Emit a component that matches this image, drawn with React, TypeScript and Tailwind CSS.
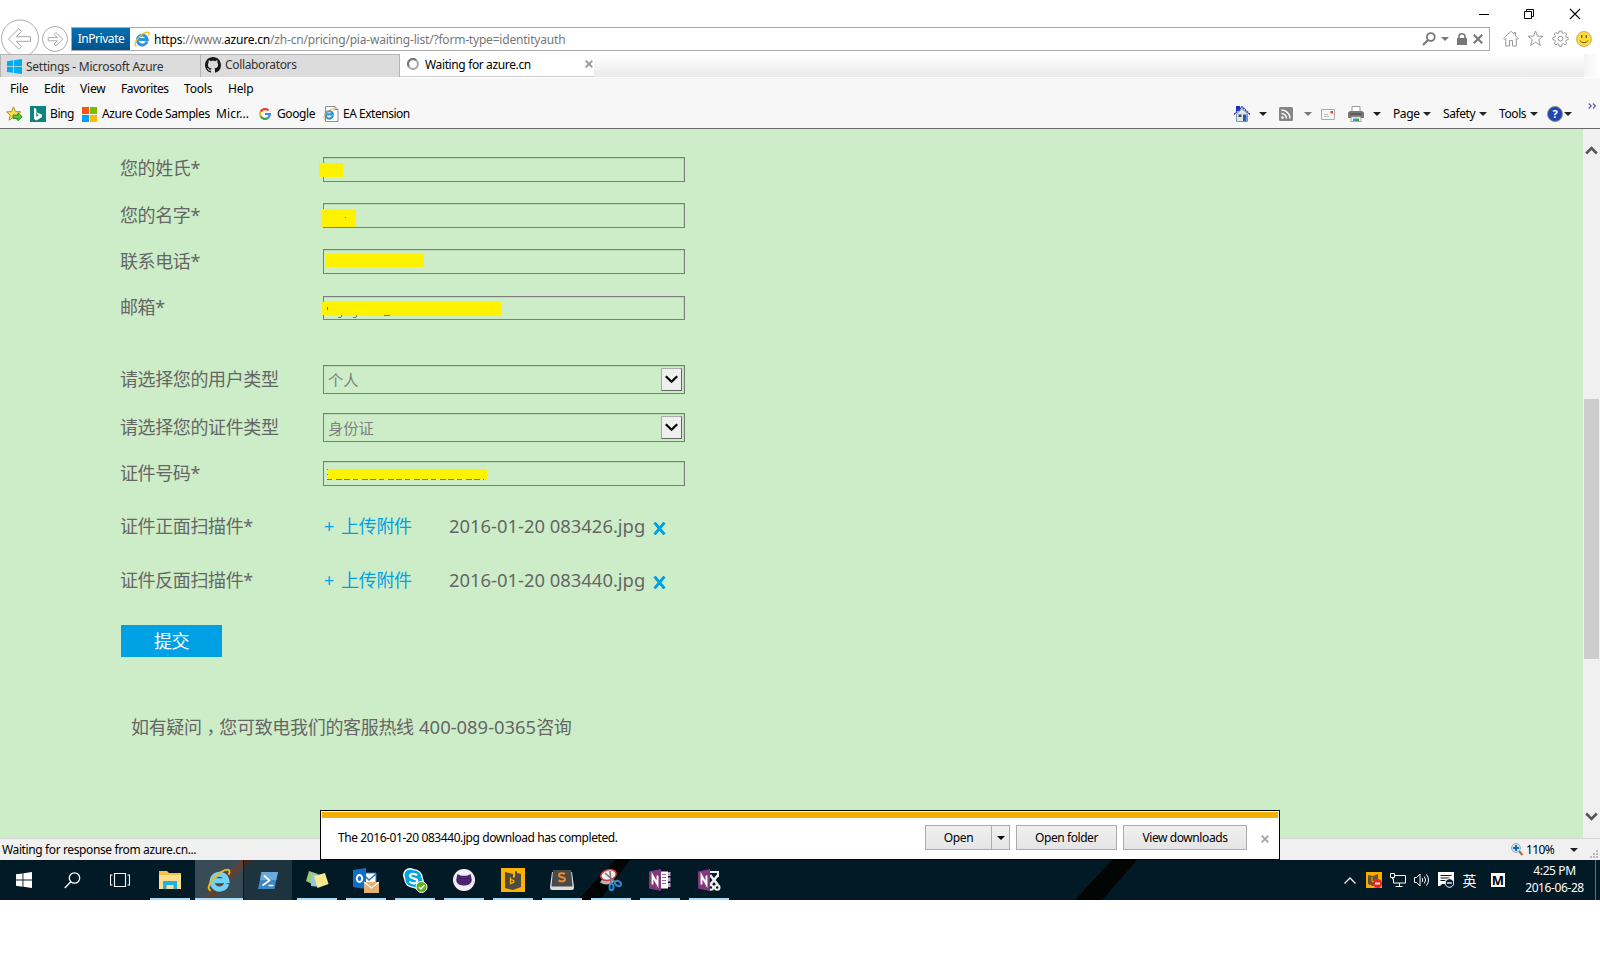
import type { ReactNode } from "react";

const Tri = ({ color = "#222" }: { color?: string }) => (
  <svg width="8" height="4" viewBox="0 0 8 4" className="shrink-0">
    <path d="M0 0h8L4 4z" fill={color} />
  </svg>
);

const Slot = ({ className, children }: { className: string; children?: ReactNode }) => (
  <div className={"flex shrink-0 items-center justify-center " + className}>{children}</div>
);

const Label = ({ className, children }: { className: string; children: ReactNode }) => (
  <span className={"shrink-0 whitespace-nowrap " + className}>{children}</span>
);

const IeLogo = ({ size, light }: { size: number; light?: boolean }) => (
  <svg width={size} height={size} viewBox="0 0 22 22" className="shrink-0">
    <path
      d="M18 14.4A6.800 6.800 0 1 1 18.200 11.600H7"
      fill="none"
      stroke={light ? "#6fd3f8" : "#2f93da"}
      strokeWidth={light ? 4.6 : 4}
    />
    <path
      d="M3.6 20.6C-1 20 2.5 12 9 6.5C14 2.2 20 0 20.6 2.8c.3 1-.2 2.3-.8 3.3"
      fill="none"
      stroke="#f5b81c"
      strokeWidth="1.7"
    />
  </svg>
);

/* ---------- window and address bar ---------- */

const WindowButtons = () => (
  <div className="flex h-[27px] items-center justify-end pr-[19px] pt-px">
    <svg width="12" height="12" viewBox="0 0 12 12">
      <path d="M1 6.5h10" stroke="#000" />
    </svg>
    <svg width="12" height="12" viewBox="0 0 12 12" className="ml-[33px]">
      <path d="M1.5 3.5h7v7h-7zM3.5 3V1.5h7v7H9" fill="none" stroke="#000" />
    </svg>
    <svg width="12" height="12" viewBox="0 0 12 12" className="ml-[34px]">
      <path d="M1 1l10 10M11 1L1 11" stroke="#000" strokeWidth="1.1" />
    </svg>
  </div>
);

const NavButtons = () => (
  <svg width="71" height="38" viewBox="0 16 71 38" className="-mt-[11px] shrink-0">
    <g fill="none" stroke="#a9a9a9">
      <circle cx="20" cy="38.5" r="18.5" fill="#fff" />
      <circle cx="55" cy="39" r="12.5" fill="#fff" />
      <path
        d="M8.5 39L18.8 28.8l2.7 2.7-5.2 5.2h14.2v4.6H16.3l5.2 5.2-2.7 2.7z"
        strokeLinejoin="round"
      />
      <path
        d="M62.8 39.2l-6.9-6.7-1.8 1.9 3.2 3.2h-9.1v3.2h9.1L54.1 44l1.8 1.9z"
        strokeLinejoin="round"
      />
    </g>
  </svg>
);

const AddressBar = () => (
  <div className="flex h-[27px]">
    <NavButtons />
    <div className="flex h-6 w-[1419px] shrink-0 items-center border border-[#ababab]">
      <div className="flex h-[22px] w-[58px] items-center justify-center bg-linear-to-b from-[#0670b0] to-[#00538a] text-[12px] tracking-[-0.45px] text-white">
        InPrivate
      </div>
      <Slot className="ml-[3px] w-[17px]">
        <IeLogo size={16} />
      </Slot>
      <Label className="ml-1 w-[1237px] pt-0.5 text-[12px] tracking-[-0.2px] text-[#777]">
        <span className="text-black">https</span>://www.<span className="text-black">azure.cn</span>
        /zh-cn/pricing/pia-waiting-list/?form-type=identityauth
      </Label>
      <Slot className="ml-[30px] w-[16px]">
        <svg width="14" height="14" viewBox="0 0 14 14">
          <circle cx="8.8" cy="5" r="3.9" fill="none" stroke="#777" strokeWidth="1.8" />
          <path d="M6 8L1 13" stroke="#777" strokeWidth="2" />
        </svg>
      </Slot>
      <Slot className="ml-0.5 w-3">
        <Tri color="#777" />
      </Slot>
      <Slot className="ml-[3px] w-4">
        <svg width="10" height="12" viewBox="0 0 10 12">
          <path d="M2 6V3.5a3 2.7 0 0 1 6 0V6" fill="none" stroke="#777" strokeWidth="1.6" />
          <path d="M0 5h10v7H0z" fill="#777" />
        </svg>
      </Slot>
      <Slot className="w-4">
        <svg width="10" height="10" viewBox="0 0 10 10">
          <path d="M.8.8l8.4 8.4M9.2.8L.8 9.2" stroke="#777" strokeWidth="2.1" />
        </svg>
      </Slot>
    </div>
    <div className="flex h-[23px] items-center gap-2 pl-[13px]">
      <svg width="16" height="17" viewBox="0 0 16 17" fill="none" stroke="#999">
        <path d="M.7 8.5L8 1.2l3 3V2.5h1.5V5.7l2.8 2.8-1 1-1-1V16H9.500v-5.500h-3V16H2.700V8.500l-1 1z" />
      </svg>
      <svg width="17" height="17" viewBox="0 0 17 17" fill="none" stroke="#999">
        <path d="M8.500 1l2 5.200h5.500l-4.300 3.500 1.700 5.800-4.900-3.400-4.900 3.400 1.700-5.800L1 6.200h5.500z" />
      </svg>
      <svg width="17" height="17" viewBox="0 0 17 17" fill="none" stroke="#999">
        <path d="M7.300 1h2.400l.4 2 1.300.6 1.700-1.200 1.700 1.700-1.200 1.700.6 1.300 1.900.4v2.300l-1.900.4-.6 1.300 1.200 1.700-1.700 1.700-1.700-1.200-1.300.6-.4 2H7.300l-.4-2-1.300-.6-1.700 1.200-1.700-1.700 1.200-1.700-.6-1.300L.9 9.800V7.500l1.900-.4.6-1.300-1.200-1.700 1.700-1.700 1.700 1.200L6.900 3z" />
        <circle cx="8.500" cy="8.600" r="2.400" />
      </svg>
      <svg width="16" height="16" viewBox="0 0 16 16" className="-ml-px">
        <circle cx="8" cy="8" r="7.500" fill="#fcd93c" stroke="#b5a45a" strokeWidth=".8" />
        <path d="M5.700 4v3M10.300 4v3" stroke="#7b6410" strokeWidth="1.400" />
        <path d="M3.700 9.500q4.300 4.500 8.600 0" fill="none" stroke="#7b6410" />
      </svg>
    </div>
  </div>
);

/* ---------- tabs and toolbars ---------- */

const Octocat = () => (
  <svg width="16" height="16" viewBox="0 0 16 16">
    <path
      fill="#181818"
      d="M8 0C3.580 0 0 3.580 0 8c0 3.540 2.290 6.530 5.470 7.590.4.070.55-.17.55-.38 0-.19-.01-.82-.01-1.490-2.010.37-2.530-.49-2.690-.94-.09-.23-.48-.94-.82-1.130-.28-.15-.68-.52-.01-.53.63-.01 1.080.58 1.230.82.72 1.210 1.870.87 2.330.66.07-.52.28-.87.51-1.070-1.780-.2-3.640-.89-3.640-3.950 0-.87.31-1.590.82-2.150-.08-.2-.36-1.020.08-2.120 0 0 .67-.21 2.200.82.64-.18 1.320-.27 2-.27s1.360.09 2 .27c1.530-1.040 2.200-.82 2.200-.82.44 1.100.16 1.920.08 2.120.51.56.82 1.270.82 2.150 0 3.070-1.870 3.750-3.650 3.950.29.25.54.73.54 1.480 0 1.070-.01 1.930-.01 2.200 0 .21.15.46.55.38A8.010 8.010 0 0 0 16 8c0-4.420-3.580-8-8-8z"
    />
  </svg>
);

const WinFlag = ({ color, size }: { color: string; size: number }) => (
  <svg width={size} height={size} viewBox="0 0 16 16" fill={color}>
    <path d="M0 2.300L6.500 1.400v6.200H0zM7.400 1.250L16 0v7.600H7.400zM0 8.500h6.500v6.200L0 13.800zM7.400 8.500H16V16l-8.600-1.200z" />
  </svg>
);

const Tabs = () => (
  <div className="flex h-6 border-b border-white">
    <div className="flex h-[23px] w-[200px] items-center border-l border-t border-[#b4b4b4] bg-[#dcdcdc] pl-1.5 pt-0.5">
      <span className="-mt-0.5">
        <WinFlag color="#00adef" size={15} />
      </span>
      <Label className="ml-1 text-[12px] tracking-[-0.27px] text-[#333]">Settings - Microsoft Azure</Label>
    </div>
    <div className="flex h-[23px] w-[200px] items-center border-x border-t border-[#b4b4b4] bg-[#dcdcdc] pb-[3px] pl-1">
      <Octocat />
      <Label className="ml-1 text-[12px] tracking-[-0.35px] text-[#333]">Collaborators</Label>
    </div>
    <div className="flex h-[23px] w-[194px] items-center border-b border-[#ccc] bg-white pl-[7px] pr-px">
      <svg width="12" height="12" viewBox="0 0 12 12" className="-mt-0.5">
        <circle cx="6" cy="6" r="4.900" fill="none" stroke="#a5a5a5" strokeWidth="2" />
        <path d="M1.800 8.500A4.900 4.900 0 0 1 9 2.100" fill="none" stroke="#777" strokeWidth="2" />
      </svg>
      <Label className="ml-1.5 flex-1 text-[12px] tracking-[-0.37px] text-black">Waiting for azure.cn</Label>
      <svg width="8" height="8" viewBox="0 0 8 8" className="-mt-0.5">
        <path d="M.7.7l6.600 6.600M7.300.7L.7 7.300" stroke="#999" strokeWidth="1.900" />
      </svg>
    </div>
    <div className="h-[23px] w-[990px] bg-linear-to-b from-white to-[#ebebeb]" />
    <div className="h-[23px] flex-1 bg-linear-to-r from-[#f4f4f4] to-white" />
  </div>
);

const MenuBar = () => (
  <div className="flex h-[21px] items-center pl-2.5 text-[12px] tracking-[-0.2px] text-black">
    <Label className="w-[34px]">File</Label>
    <Label className="w-9">Edit</Label>
    <Label className="w-[41px]">View</Label>
    <Label className="w-[63px] tracking-[-0.4px]">Favorites</Label>
    <Label className="w-11">Tools</Label>
    <Label className="">Help</Label>
  </div>
);

const FavoritesBar = () => (
  <div className="flex h-[29px] items-center pb-px pl-1.5 pt-0.5 text-[12px] tracking-[-0.4px] text-black">
    <svg width="17" height="16" viewBox="0 0 17 16" className="shrink-0">
      <path d="M7.500.8l2 4.700 5.300.3-4 3.300 1.300 5-4.600-2.800-4.500 2.900 1.200-5.200L.6 5.900l5-.4z" fill="#fbdc55" stroke="#c28f1d" />
      <path d="M7 9h5V6.800l4.300 4-4.300 4v-2.300H7z" fill="#52c440" stroke="#2d8b22" strokeWidth=".9" />
    </svg>
    <svg width="16" height="16" viewBox="0 0 16 16" className="ml-[7px] shrink-0">
      <path d="M0 0h16v16H0z" fill="#0c8484" />
      <path d="M4 2l2.300.8v7.900l2.500-1.500-1.300-.6-.8-2 5.300 1.900v2.600l-5.600 3.300L4 13z" fill="#fff" />
    </svg>
    <Label className="ml-1 w-8">Bing</Label>
    <svg width="15" height="15" viewBox="0 0 15 15" className="shrink-0">
      <path d="M0 0h7v7H0z" fill="#f65314" />
      <path d="M8 0h7v7H8z" fill="#7cbb00" />
      <path d="M0 8h7v7H0z" fill="#00a1f1" />
      <path d="M8 8h7v7H8z" fill="#ffbb00" />
    </svg>
    <Label className="ml-[5px] w-[114px]">Azure Code Samples</Label>
    <Label className="w-[43px] tracking-[0.1px]">Micr...</Label>
    <svg width="12" height="12" viewBox="0 0 12 12" className="shrink-0" fill="none" strokeWidth="2.200">
      <path d="M1.600 3.700A5 5 0 0 1 9.500 2.500" stroke="#ea4335" />
      <path d="M1.600 8.300a5 5 0 0 1 0-4.600" stroke="#fbbc05" />
      <path d="M9.300 9.700a5 5 0 0 1-7.700-1.400" stroke="#34a853" />
      <path d="M6 6h4.900a5 5 0 0 1-1.600 3.700" stroke="#4285f4" />
    </svg>
    <Label className="ml-[6px] w-[46px]">Google</Label>
    <span className="relative shrink-0">
      <svg width="16" height="16" viewBox="0 0 16 16">
        <path d="M2.500.5h9.500l3 3v12H2.500z" fill="#fff" stroke="#909090" />
        <path d="M12 .5v3h3" fill="none" stroke="#909090" />
      </svg>
      <span className="absolute left-0 top-0.5">
        <IeLogo size={12} />
      </span>
    </span>
    <Label className="ml-1 flex-1 tracking-[-0.48px]">EA Extension</Label>

    <Slot className="w-6">
      <svg width="16" height="16" viewBox="0 0 16 16">
        <path d="M2 0h4v5H2z" fill="#1a2fb8" />
        <path d="M2.500 8L8 2.500 13.500 8v7.500h-11z" fill="#dfe6ee" stroke="#8493a5" />
        <path d="M0 8.500L8 .8l8 7.700" fill="none" stroke="#2c45b8" strokeWidth="1.500" strokeDasharray="2 .5" />
        <path d="M9 8.500h3.500V15H9z" fill="#1d5fae" />
        <path d="M4.500 8.500h3v2.500h-3z" fill="#445" />
      </svg>
    </Slot>
    <Slot className="w-[18px]"><Tri /></Slot>
    <Slot className="w-7">
      <svg width="14" height="14" viewBox="0 0 14 14">
        <rect width="14" height="14" rx="1.500" fill="#858585" />
        <g fill="none" stroke="#fff" strokeWidth="1.500">
          <path d="M2.500 6.500a5 5 0 0 1 5 5M2.500 3a8.500 8.500 0 0 1 8.500 8.500" />
        </g>
        <circle cx="3.500" cy="10.500" r="1.200" fill="#fff" />
      </svg>
    </Slot>
    <Slot className="w-4"><Tri color="#777" /></Slot>
    <Slot className="w-6">
      <svg width="14" height="11" viewBox="0 0 14 11">
        <path d="M.5.5h13v10H.5z" fill="#f6f6f6" stroke="#aaa" />
        <path d="M9.500 2h2.500v2.500H9.500z" fill="#e04040" />
        <path d="M3 5.500h4M3 7.500h5" stroke="#bbb" />
      </svg>
    </Slot>
    <Slot className="w-8">
      <svg width="16" height="16" viewBox="0 0 16 16">
        <path d="M4 .5h8V6H4z" fill="#fff" stroke="#999" />
        <path d="M0 6.500L2 5h12l2 1.500V12H0z" fill="#777" />
        <path d="M2 8h12" stroke="#444" />
        <path d="M3.500 11h9l.8 4.500H2.700z" fill="#fff" stroke="#aaa" />
        <path d="M5 12.500h3V15H5z" fill="#2f9be0" />
        <path d="M8 12.500h3V15H8z" fill="#3b9b4a" />
      </svg>
    </Slot>
    <Slot className="w-2.5"><Tri /></Slot>
    <Label className="ml-[11px] w-[30px]">Page</Label>
    <Tri />
    <Label className="ml-3 w-9">Safety</Label>
    <Tri />
    <Label className="ml-3 w-[31px]">Tools</Label>
    <Tri />
    <Slot className="ml-2 w-[18px]">
      <span className="flex size-4 items-center justify-center rounded-full border border-[#8b8b8b] bg-[#2146b4] text-[11px] font-bold text-white">
        ?
      </span>
    </Slot>
    <Tri />
    <Slot className="ml-2 w-5 pb-[17px] pl-1">
      <svg width="9" height="6" viewBox="0 0 9 6">
        <path d="M.7.5L3.200 3 .7 5.500M5 .5L7.500 3 5 5.500" fill="none" stroke="#5a5cae" strokeWidth="1.200" />
      </svg>
    </Slot>
  </div>
);

/* ---------- form ---------- */

type FormRowProps = { label: string; className: string; raised?: boolean; children: ReactNode };

const FormRow = ({ label, className, raised, children }: FormRowProps) => (
  <div className={"flex items-center " + className}>
    <Label className={"w-[203px] leading-6 " + (raised ? "pb-[3px]" : "pb-px")}>{label}</Label>
    {children}
  </div>
);

const TextBox = ({ children }: { children?: ReactNode }) => (
  <div className="relative h-full w-[362px] border border-[#7d7d7d] shadow-[inset_-1px_1px_0_#bcd9b8]">{children}</div>
);

const SelectBox = ({ value }: { value: string }) => (
  <div className="flex h-full w-[362px] items-center justify-between border border-[#7d7d7d] pl-1 pr-[2px] text-[15.3px] tracking-normal text-[#808080] shadow-[inset_-1px_1px_0_#bcd9b8]">
    <span className="pt-px">{value}</span>
    <span className="flex h-[23px] w-[21px] items-center justify-center border border-b-[#666] border-l-[#aaa] border-r-[#666] border-t-[#aaa] bg-[#efefef]">
      <svg width="13" height="9" viewBox="0 0 13 9">
        <path d="M.8 1.200l5.700 5.600 5.700-5.600" fill="none" stroke="#000" strokeWidth="2.200" />
      </svg>
    </span>
  </div>
);

const UploadRow = ({ label, file, className }: { label: string; file: string; className: string }) => (
  <FormRow raised label={label} className={"h-[26px] " + className}>
    <Label className="w-[126px] pb-px pl-px tracking-[-0.3px] text-[#00a1e4]">
      <span className="mr-[6px] inline-block w-[11px]">+</span>上传附件
    </Label>
    <Label className="w-[204px] pb-[3px] text-[18.4px] tracking-normal">{file}</Label>
    <svg width="13" height="13" viewBox="0 0 13 13" className="mt-0.5">
      <path d="M1.500.5l10 12M11.500.5l-10 12" stroke="#00a1e4" strokeWidth="2.900" />
    </svg>
  </FormRow>
);

const Page = () => (
  <div className="flex h-[709px]">
    <div className="w-[1583px] bg-[#cdedc8] pl-[120px] pt-7 text-[18px] tracking-[-0.38px] text-[#666]">
      <FormRow raised label="您的姓氏*" className="h-[25px]">
        <TextBox>
          <div className="absolute -left-[5px] top-[5px] h-[14px] w-6 bg-[#fff200]" />
        </TextBox>
      </FormRow>
      <FormRow label="您的名字*" className="mt-[21px] h-[25px]">
        <TextBox>
          <div className="absolute -left-[3px] top-[5px] h-[18px] w-[35px] bg-[#fff200]">
            <div className="absolute left-[24px] top-2 size-px bg-[#777]" />
          </div>
        </TextBox>
      </FormRow>
      <FormRow label="联系电话*" className="mt-[21px] h-[25px]">
        <TextBox>
          <div className="absolute left-[2px] top-1 h-[13px] w-[98px] bg-[#fff200]" />
        </TextBox>
      </FormRow>
      <FormRow raised label="邮箱*" className="mt-[22px] h-6">
        <TextBox>
          <svg width="60" height="3" viewBox="0 0 60 3" className="absolute left-[12px] top-[18px]">
            <path d="M2 2.500h3l1-2.500M17 2.500h3l1-2.500M48 .5h6" fill="none" stroke="#777" />
          </svg>
          <div className="absolute -left-[2px] top-[5px] h-[13px] w-[179px] bg-[#fff200]">
            <div className="absolute left-[5px] top-[5px] h-[3px] w-px bg-[#777]" />
            <div className="absolute right-[5px] top-[5px] h-[3px] w-px bg-[#cdedc8]" />
          </div>
        </TextBox>
      </FormRow>
      <FormRow label="请选择您的用户类型" className="mt-[45px] h-[29px]">
        <SelectBox value="个人" />
      </FormRow>
      <FormRow label="请选择您的证件类型" className="mt-[19px] h-[29px]">
        <SelectBox value="身份证" />
      </FormRow>
      <FormRow label="证件号码*" className="mt-[19px] h-[25px]">
        <TextBox>
          <svg width="160" height="12" viewBox="0 0 160 12" className="absolute left-[2px] top-[7px]">
            <path d="M1 10.500h157" stroke="#777" strokeDasharray="5 4 6 2 6 3" />
            <path d="M1 .5h2M1 5.500h2" stroke="#777" />
          </svg>
          <div className="absolute left-[4px] top-[7px] h-[10px] w-[159px] bg-[#fff200]" />
        </TextBox>
      </FormRow>
      <UploadRow label="证件正面扫描件*" file="2016-01-20 083426.jpg" className="mt-7" />
      <UploadRow label="证件反面扫描件*" file="2016-01-20 083440.jpg" className="mt-7" />
      <button className="ml-px mt-[31px] flex h-8 w-[101px] items-center justify-center bg-[#00a1e4] pt-px text-white">
        提交
      </button>
      <p className="ml-[11px] mt-[56px] h-[26px] whitespace-nowrap leading-[26px] tracking-[-0.33px]">
        如有疑问
        <span className="inline-block translate-y-[5px] font-['Noto_Sans_CJK_TC',sans-serif]" lang="zh-TW">
          ，
        </span>
        您可致电我们的客服热线 <span className="ml-px text-[18.4px] tracking-normal">400-089-0365</span>咨询
      </p>
    </div>
    <div className="flex w-[17px] flex-col items-center bg-[#f0f0f0]">
      <svg width="13" height="9" viewBox="0 0 13 9" className="mt-[17px]">
        <path d="M1.200 7.500l5.300-5.300 5.300 5.300" fill="none" stroke="#555" strokeWidth="2.600" />
      </svg>
      <div className="mt-[244px] h-[260px] w-[15px] bg-[#cdcdcd]" />
      <svg width="13" height="9" viewBox="0 0 13 9" className="mt-[153px]">
        <path d="M1.200 1.500l5.300 5.300 5.300-5.300" fill="none" stroke="#555" strokeWidth="2.600" />
      </svg>
    </div>
  </div>
);

/* ---------- download bar, status bar ---------- */

const buttonStyle = "flex h-[25px] items-center justify-center border border-[#acacac] bg-linear-to-b from-[#f0f0f0] to-[#e5e5e5]";

const DownloadBar = () => (
  <div className="absolute left-[320px] top-[810px] flex h-[50px] w-[960px] flex-col border border-black bg-white p-px text-[12px] tracking-[-0.42px] text-black">
    <div className="h-[6px] shrink-0 bg-[#f3b000]" />
    <div className="flex pl-4 pt-[7px]">
      <Label className="w-[587px] leading-[25px]">The 2016-01-20 083440.jpg download has completed.</Label>
      <div className={buttonStyle + " w-[67px] tracking-[-0.3px]"}>Open</div>
      <div className={buttonStyle + " -ml-px w-[19px]"}>
        <Tri color="#000" />
      </div>
      <div className={buttonStyle + " ml-1.5 w-[101px]"}>Open folder</div>
      <div className={buttonStyle + " ml-1.5 w-[124px]"}>View downloads</div>
      <svg width="8" height="8" viewBox="0 0 8 8" className="ml-[14px] mt-[10px]">
        <path d="M.7.7l6.600 6.600M7.300.7L.7 7.300" stroke="#a5a5a5" strokeWidth="1.900" />
      </svg>
    </div>
  </div>
);

const StatusBar = () => (
  <div className="flex h-[22px] items-center border-t border-[#d7d7d7] bg-[#f0f0f0] pl-0.5 text-[12px] tracking-[-0.38px] text-black">
    <Label className="flex-1">Waiting for response from azure.cn...</Label>
    <svg width="12" height="13" viewBox="0 0 12 13">
      <path d="M8 8l3.500 4" stroke="#a8703a" strokeWidth="2.200" />
      <circle cx="5" cy="5" r="4.400" fill="#d5ebfa" stroke="#86a5bd" />
      <path d="M5 2v6M2 5h6" stroke="#1464c0" strokeWidth="2" />
    </svg>
    <Label className="ml-[3px] w-[44px] tracking-[-0.6px]">110%</Label>
    <Tri />
    <svg width="8" height="8" viewBox="0 0 8 8" className="ml-3 mr-[2px] mt-2" fill="#b9b9b9">
      <path d="M6 0h2v2H6zM3 3h2v2H3zM6 3h2v2H6zM0 6h2v2H0zM3 6h2v2H3zM6 6h2v2H6z" />
    </svg>
  </div>
);

/* ---------- taskbar ---------- */

const TaskButton = ({ state = "open", children }: { state?: "open" | "active" | "hover"; children: ReactNode }) => {
  const fill = state === "active" ? "bg-[#ffffff38]" : state === "hover" ? "bg-[#ffffff1c]" : "";
  const bar = state === "active" ? "w-12 bg-[#a9dcfa]" : state === "hover" ? "w-0" : "w-10 bg-[#a9dcfa]";
  return (
    <div className={"flex h-10 w-12 flex-col items-center " + fill}>
      <div className="flex h-[38px] items-center justify-center pt-0.5">{children}</div>
      <div className={"h-0.5 " + bar} />
    </div>
  );
};

const OneNote = ({ clip }: { clip?: boolean }) => (
  <svg width="24" height="24" viewBox="0 0 24 24">
    {clip ? (
      <g fill="none" stroke="#eee" strokeWidth="2">
        <path d="M12 4h9v5" />
        <path d="M13 7l8 10M21 7l-8 10" strokeWidth="2.600" />
        <circle cx="13.800" cy="19.500" r="2.300" />
        <circle cx="20.200" cy="19.500" r="2.300" />
      </g>
    ) : (
      <g>
        <path d="M12 3.500h8v17h-8z" fill="#fff" />
        <path d="M14 6.500h4M14 9.500h4M14 12.500h4M14 15.500h4" stroke="#80397b" strokeWidth=".8" />
        <path d="M20 4h2.500v4H20zM20 9.500h2.500v4H20zM20 15h2.500v4H20z" fill="#c9a0c6" />
      </g>
    )}
    <path d="M1 3.500L13 1v22L1 20.500z" fill="#80397b" />
    <path d="M4.500 16.500v-9l5 9v-9" fill="none" stroke="#fff" strokeWidth="1.900" />
  </svg>
);

const Taskbar = () => (
  <div className="relative flex h-10 bg-[#021a26] text-white">
    <svg width="1600" height="40" viewBox="0 0 1600 40" className="absolute inset-0">
      <path d="M200 40l40-40h12l-40 40z" fill="#2e0d00" />
      <path d="M578 40l37-40h15l-30 40zM1075 40l37-40h25l-35 40z" fill="#030504" />
    </svg>
    <div className="relative flex flex-1">
      <Slot className="w-12"><WinFlag color="#fff" size={16} /></Slot>
      <Slot className="w-12">
        <svg width="17" height="17" viewBox="0 0 17 17" fill="none" stroke="#fff" strokeWidth="1.300">
          <circle cx="10.500" cy="6" r="5.200" />
          <path d="M6.800 9.700L.8 16" />
        </svg>
      </Slot>
      <Slot className="mr-0.5 w-12">
        <svg width="20" height="14" viewBox="0 0 20 14" fill="none" stroke="#fff" strokeWidth="1.100">
          <path d="M4.500.5h11v13h-11zM2.500 2h-2v10h2M17.500 2h2v10h-2" />
        </svg>
      </Slot>
      <div className="flex gap-px">
        <TaskButton>
          <svg width="22" height="18" viewBox="0 0 22 18">
            <path d="M0 0h8l2 2h12v16H0z" fill="#f2c14e" />
            <path d="M0 4h22v14H0z" fill="#fddf8c" />
            <path d="M4 10h14v8h-3.500v-4h-7v4H4z" fill="#1fb0ea" />
          </svg>
        </TaskButton>
        <TaskButton state="active"><IeLogo size={24} light /></TaskButton>
        <TaskButton state="hover">
          <svg width="20" height="17" viewBox="0 0 20 17">
            <path d="M3.500 0H20l-3.500 17H0z" fill="#3f86c4" />
            <path d="M3.500 0H20l-1.800 8H2z" fill="#6aa9dc" />
            <path d="M6 3.500l5.500 5L4.500 13.500M10.500 13.500h5" fill="none" stroke="#fff" strokeWidth="1.700" />
          </svg>
        </TaskButton>
        <TaskButton>
          <svg width="24" height="20" viewBox="0 0 24 20">
            <path d="M4 1l9 3-4 11-8-4z" fill="#9ccb6e" />
            <path d="M6 4l10 1-1 12-9-1z" fill="#8fc5ea" />
            <path d="M9 6l11-3 3.500 11-11 4z" fill="#f7e889" />
          </svg>
        </TaskButton>
        <TaskButton>
          <svg width="26" height="26" viewBox="0 0 26 26">
            <path d="M10 6h13v11H10z" fill="#fff" stroke="#2372ba" />
            <path d="M12 9l4 4 7-6" fill="none" stroke="#2372ba" strokeWidth="1.500" />
            <path d="M0 3l13-2v21L0 20z" fill="#0f6fc6" />
            <ellipse cx="6.500" cy="11.500" rx="2.700" ry="3.500" fill="none" stroke="#fff" strokeWidth="2" />
            <path d="M11 15h15v11H11z" fill="#e6b274" />
            <path d="M11 15l7.500 6 7.500-6" fill="none" stroke="#fff" strokeWidth="1.200" />
          </svg>
        </TaskButton>
        <TaskButton>
          <svg width="26" height="26" viewBox="0 0 26 26">
            <circle cx="8" cy="8" r="7" fill="#fff" />
            <circle cx="15" cy="15" r="7" fill="#fff" />
            <circle cx="11.500" cy="11.500" r="9.500" fill="#fff" />
            <circle cx="8" cy="8" r="5.500" fill="#00a4e4" />
            <circle cx="15" cy="15" r="5.500" fill="#00a4e4" />
            <circle cx="11.500" cy="11.500" r="8.300" fill="#00a4e4" />
            <path d="M15 8.500C13.500 6 8 6.300 8 9c0 3 7.300 1.800 7.300 5 0 3-6 3.300-7.800.5" fill="none" stroke="#fff" strokeWidth="2.200" />
            <circle cx="19.500" cy="20" r="5.500" fill="#5bb318" stroke="#fff" />
            <path d="M17 20l2 2 3.500-4" fill="none" stroke="#fff" strokeWidth="1.500" />
          </svg>
        </TaskButton>
        <TaskButton>
          <svg width="22" height="22" viewBox="0 0 22 22">
            <circle cx="11" cy="11" r="11" fill="#f3f0f7" />
            <path d="M4.500 5l3.500 1.800h6L17.500 5l1.200 5c.5 4.500-3.200 6.500-7.700 6.500S2.800 14.500 3.300 10z" fill="#4a2470" />
          </svg>
        </TaskButton>
        <TaskButton>
          <svg width="24" height="24" viewBox="0 0 24 24">
            <path d="M0 0h24v24H0z" fill="#fdb300" />
            <path d="M4 4l8 2v4l2-1V3l2 .5V5l4 1v13l-8 3-8-2z" fill="#50493f" />
            <path d="M9.500 9.500v6l3.200-1.200v-1.800l-3-1" fill="none" stroke="#fdb300" strokeWidth="1.300" />
          </svg>
        </TaskButton>
        <TaskButton>
          <svg width="24" height="22" viewBox="0 0 24 22">
            <path d="M2 3h20l2 15q0 3-2 3H2q-2 0-2-3z" fill="#dedede" />
            <path d="M3 1h18l1.500 16.500h-21z" fill="#494949" />
            <path d="M15 5C13 3.600 9 4 9 6.200c0 2.600 6 1.500 6 4.100 0 2.300-4 2.700-6.500 1" fill="none" stroke="#f08a24" strokeWidth="2" />
          </svg>
        </TaskButton>
        <TaskButton>
          <svg width="24" height="24" viewBox="0 0 24 24">
            <path d="M2 13q6 4 13-1" fill="none" stroke="#b5b5b5" strokeWidth="3.500" />
            <ellipse cx="9.500" cy="7" rx="7.800" ry="5.200" transform="rotate(-15 9.500 7)" fill="#eee" stroke="#d8383b" strokeWidth="1.500" />
            <path d="M6 5l10 9M11 3l1 12" stroke="#777" strokeWidth="1.600" />
            <g fill="none" stroke="#2c8ad2" strokeWidth="2">
              <ellipse cx="12.500" cy="19" rx="2" ry="3.200" />
              <ellipse cx="19" cy="15.500" rx="3.200" ry="2.300" transform="rotate(35 19 15.500)" />
            </g>
          </svg>
        </TaskButton>
        <TaskButton><OneNote /></TaskButton>
        <TaskButton><OneNote clip /></TaskButton>
      </div>
    </div>
    <div className="relative flex">
      <Slot className="w-6">
        <svg width="12" height="7" viewBox="0 0 12 7">
          <path d="M.5 6.500L6 1l5.500 5.500" fill="none" stroke="#fff" strokeWidth="1.300" />
        </svg>
      </Slot>
      <Slot className="w-6">
        <svg width="16" height="16" viewBox="0 0 16 16">
          <path d="M0 0h16v16H0z" fill="#fdaa00" />
          <path d="M2 3l5 1 5-2v8l-5 4-5-2z" fill="#665431" />
          <path d="M6 5v5l4-2" fill="none" stroke="#fdaa00" />
          <circle cx="11.500" cy="11.500" r="4.500" fill="#e3271f" />
          <path d="M9 11.500h5" stroke="#fff" strokeWidth="1.800" />
        </svg>
      </Slot>
      <Slot className="w-6">
        <svg width="16" height="14" viewBox="0 0 16 14" fill="none" stroke="#fff">
          <path d="M5 2.500h10.500v7.500H3.500V6M9.500 10v3M5.500 13.500h7M.5.500h4v4h-4zM2.500 4.500V6H4" />
        </svg>
      </Slot>
      <Slot className="w-6">
        <svg width="16" height="14" viewBox="0 0 16 14" fill="none" stroke="#fff">
          <path d="M.5 4.500h2L6 1v12L2.500 9.500h-2zM8 5q1.500 2 0 4M10.200 3.500q3 3.500 0 7M12.500 1.500q4 5.500 0 11" />
        </svg>
      </Slot>
      <Slot className="w-6">
        <svg width="16" height="16" viewBox="0 0 16 16">
          <path d="M0 0h16v12H4l-2 2H0z" fill="#fff" />
          <path d="M2.500 3.500h11M2.500 6h9M2.500 8.500h5" stroke="#021a26" strokeWidth="1.200" />
          <circle cx="11.500" cy="11" r="4.300" fill="#021a26" stroke="#fff" />
          <path d="M9 11h5" stroke="#fff" strokeWidth="1.300" />
        </svg>
      </Slot>
      <Slot className="w-6 pr-px text-[14px]">英</Slot>
      <Slot className="w-8">
        <span className="flex size-[14px] items-center justify-center bg-white text-[13px] font-bold leading-none text-black">M</span>
      </Slot>
      <div className="flex w-[81px] flex-col items-center justify-center pb-0.5 text-[12px] leading-[17px] tracking-[-0.4px]">
        <span>4:25 PM</span>
        <span>2016-06-28</span>
      </div>
      <div className="mr-1 w-px bg-[#5f7079]" />
    </div>
  </div>
);

export default function App() {
  return (
    <div className="relative h-[964px] w-[1600px] overflow-hidden bg-white font-['Noto_Sans','Noto_Sans_CJK_SC',sans-serif]">
      <WindowButtons />
      <AddressBar />
      <Tabs />
      <div className="h-[51px] border-b border-[#6b6b6b] bg-[#f7f7f7]">
        <MenuBar />
        <FavoritesBar />
      </div>
      <Page />
      <StatusBar />
      <Taskbar />
      <DownloadBar />
    </div>
  );
}
